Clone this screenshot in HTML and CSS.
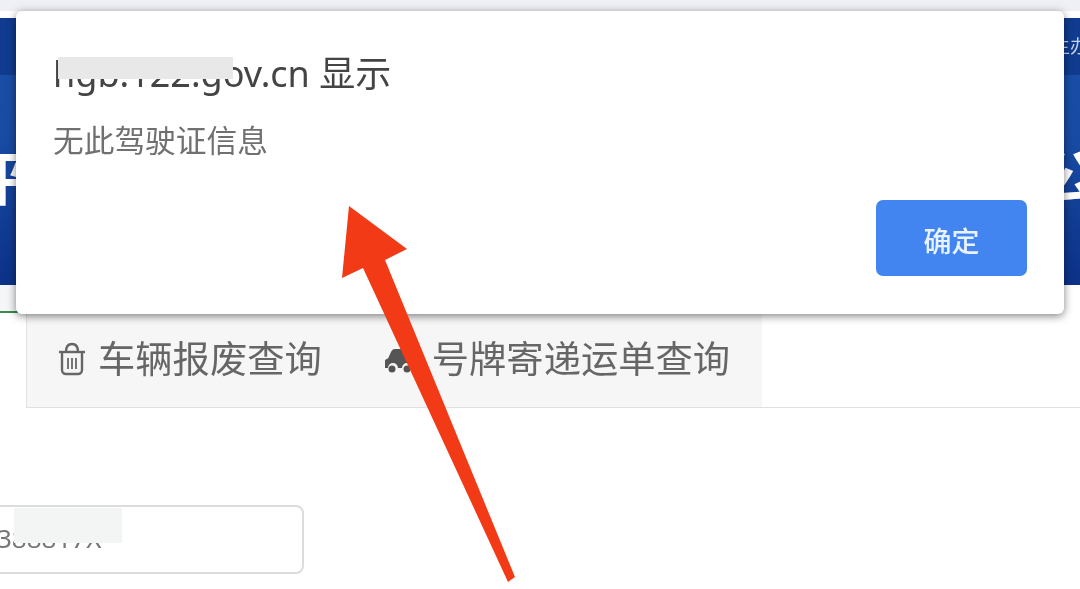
FILE: index.html
```html
<html>
<head>
    <title>驾驶证查询</title>
    <meta charset="utf-8">
    <link rel="stylesheet" href="styles.css">
</head>
<body>
<div class="page">
    <div class="top-strip"></div>
    <div class="banner">
        <div class="banner-top"><span class="banner-small">主办</span></div>
        <div class="banner-title">
            <span class="title-left">平</span>
            <span class="title-right">公</span>
        </div>
    </div>
    <div class="green-line"></div>
    <div class="tabs-row">
        <div class="tabs">
            <div class="tab tab-first">
                <svg class="tab-icon" width="28" height="34" viewBox="0 0 28 34" fill="none" stroke="#666" stroke-width="2.400">
                    <path d="M1 10h26"/>
                    <path d="M8 10C8 5 10 2 14 2s6 3 6 8"/>
                    <path d="M4 11v17a4 4 0 0 0 4 4h12a4 4 0 0 0 4-4V11"/>
                    <path d="M10 16v11M14 16v11M18 16v11" stroke-width="1.800"/>
                </svg>
                <span>车辆报废查询</span>
            </div>
            <div class="tab tab-second">
                <svg class="tab-icon car-icon" width="32" height="24" viewBox="0 0 32 24">
                    <path fill="#555" d="M1 19v-7c0-1.500 1-2 3-2.500L7 3c1-2 2-3 4-3h10c2 0 3 1 4 3l3 6.500c2 .500 3 1 3 2.500v7h-3a5 5 0 0 0-10 0h-4a5 5 0 0 0-10 0z"/>
                    <circle cx="8" cy="20" r="3.500" fill="#555"/>
                    <circle cx="23" cy="20" r="3.500" fill="#555"/>
                </svg>
                <span>号牌寄递运单查询</span>
            </div>
        </div>
    </div>
    <div class="form-row">
        <div class="id-input">
            <span class="id-value">388817X</span>
            <div class="id-mask"></div>
        </div>
    </div>

    <div class="dialog">
        <div class="dialog-title">
            <span>hgb.122.gov.cn 显示</span>
            <div class="host-mask"></div>
        </div>
        <div class="dialog-msg">无此驾驶证信息</div>
        <div class="dialog-actions">
            <button class="ok-btn">确定</button>
        </div>
    </div>

    <svg class="arrow" width="1080" height="589" viewBox="0 0 1080 589">
        <polygon fill="#f23a16" points="349,206 407,249 385,260 515,577 508,582 363,268 342,278"/>
    </svg>
</div>
</body>
</html>
```

FILE: styles.css
```css
html, body{
    margin: 0;
    padding: 0;
    background: #fff;
    overflow: hidden;
}
.page{
    position: relative;
    width: 1080px;
    height: 589px;
    overflow: hidden;
    background: #fff;
    font-family: "Noto Sans", "Noto Sans CJK SC", sans-serif;
    filter: blur(0.5px);
}
.top-strip{
    height: 11px;
    background: #eef0f5;
}
/* BANNER BEHIND THE DIALOG */
.banner{
    margin-top: 7px;
    height: 267px;
    overflow: hidden;
    background: linear-gradient(#1a4ea6 57px, #184ba3 120px, #0c3187 100%);
    color: #fff;
}
.banner-top{
    display: flex;
    justify-content: flex-end;
    height: 57px;
    background: #103b8e;
}
.banner-small{
    margin: 14px -8px 0 0;
    font-size: 18px;
    line-height: 28px;
    color: #c5d4ee;
}
.banner-title{
    display: flex;
    justify-content: space-between;
    margin-top: 68px;
    font-size: 58px;
    line-height: 70px;
    font-weight: 700;
}
.title-left{
    margin-left: -27px;
}
.title-right{
    margin-right: -18px;
}
.green-line{
    width: 20px;
    height: 26px;
    border-bottom: 2px solid #3a8a4c;
    background: #f4f6f7;
}
/* TABS */
.tabs-row{
    box-sizing: border-box;
    height: 95px;
    margin-left: 26px;
    border-bottom: 1px solid #dfe0e2;
}
.tabs{
    display: flex;
    align-items: center;
    box-sizing: border-box;
    width: 736px;
    height: 94px;
    padding: 0 0 3px 31px;
    background: #f6f6f7;
    border-left: 1px solid #e2e2e4;
}
.tab{
    display: flex;
    align-items: center;
    font-size: 37.300px;
    line-height: 50px;
    color: #666;
}
.tab-icon{
    margin-right: 12px;
}
.car-icon{
    margin-top: 5px;
}
.tab-second{
    margin-left: 62px;
}
.tab-second .tab-icon{
    margin-right: 16px;
}
/* ID NUMBER INPUT, CUT OFF BY THE LEFT EDGE */
.form-row{
    padding-top: 97px;
}
.id-input{
    position: relative;
    box-sizing: border-box;
    margin-left: -10px;
    width: 314px;
    height: 69px;
    padding: 9px 0 0 5px;
    background: #fff;
    border: 2px solid #dcdcdc;
    border-radius: 8px;
}
.id-value{
    font-size: 26px;
    line-height: 44px;
    color: #777;
}
.id-mask{
    position: absolute;
    left: 22px;
    top: 1px;
    width: 108px;
    height: 35px;
    background: #f3f4f4;
}
/* ALERT DIALOG */
.dialog{
    position: absolute;
    left: 16px;
    top: 11px;
    display: flex;
    flex-direction: column;
    box-sizing: border-box;
    width: 1048px;
    height: 303px;
    padding: 38px 37px 38px 37px;
    background: #fff;
    border-radius: 6px;
    box-shadow: 0 2px 8px rgba(0,0,0,0.5);
}
.dialog-title{
    position: relative;
    font-size: 36px;
    line-height: 50px;
    color: #444;
}
.host-mask{
    position: absolute;
    left: 5px;
    top: 8px;
    width: 175px;
    height: 22px;
    background: #e8e8e8;
}
.dialog-msg{
    margin-top: 21px;
    font-size: 30.700px;
    line-height: 40px;
    color: #707070;
}
.dialog-actions{
    display: flex;
    justify-content: flex-end;
    margin-top: auto;
}
.ok-btn{
    width: 151px;
    height: 76px;
    padding: 3px 0 0;
    border: 0;
    border-radius: 7px;
    background: #4285f0;
    font-family: inherit;
    font-size: 28px;
    font-weight: 500;
    color: #e8f3ff;
}
.arrow{
    position: absolute;
    left: 0;
    top: 0;
}
```
